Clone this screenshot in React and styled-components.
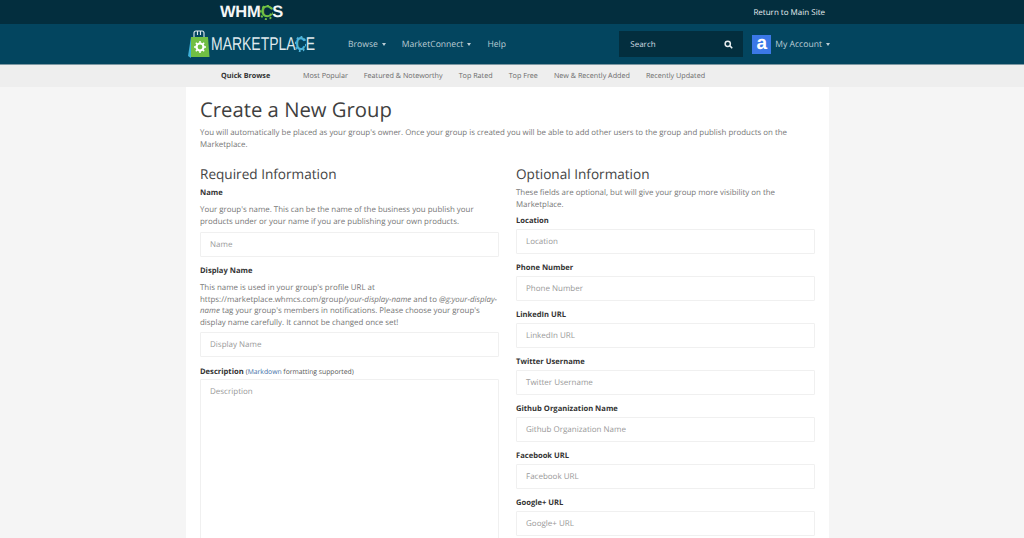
import React from "react";
import styled, { createGlobalStyle } from "styled-components";

const Global = createGlobalStyle`
  html, body { margin: 0; padding: 0; height: 538px; overflow: hidden; background: #f5f5f5; }
  body { font-family: "Open Sans", "Liberation Sans", sans-serif; text-rendering: geometricPrecision; }
  * { box-sizing: border-box; }
`;
const Page = styled.div`width: 1024px; height: 538px; overflow: hidden; display: flex; flex-direction: column;`;
const Inner = styled.div`width: 644px; margin: 0 auto 0 186px; display: flex; align-items: center; height: 100%;`;
const TopBar = styled.div`height: 24px; background: #032e3e; flex: none;`;
const Whmcs = styled.div`margin-left: 34px; font: 700 16.500px "Liberation Sans", sans-serif; color: #f4f6f6; letter-spacing: -0.2px; display: flex; align-items: center;`;
const Return = styled.a`margin-left: auto; margin-right: 5px; font-size: 8px; color: #e8eef0;`;
const NavBar = styled.div`height: 41px; background: #03455f; flex: none; border-bottom: 1px solid #7d98a3;`;
const LogoSlot = styled.div`width: 105px; margin-left: 1px; flex: none;`;
const LogoText = styled.div`font: 400 18.500px "Liberation Sans", sans-serif; color: #dfe9ee; white-space: nowrap; transform: scaleX(0.755); transform-origin: left center;`;
const Cog = styled.span`position: relative; display: inline-block; color: ${p => p.$color}; font-weight: 700;`;
const CogTeeth = styled.svg`position: absolute; left: -1px; top: 50%; margin-top: -${p => p.$size / 2}px; width: calc(100% + 2px); height: ${p => p.$size}px;`;
const NavLink = styled.a`font-size: 8.600px; color: #bccdd5; margin-right: 16px; display: flex; align-items: center; gap: 4px;`;
const Links = styled.div`display: flex; margin-left: 32px;`;
const Caret = styled.i`width: 0; height: 0; border: 2.500px solid transparent; border-top: 3px solid currentColor; border-bottom: 0; display: inline-block;`;
const Search = styled.div`margin-left: auto; width: 124px; height: 26px; background: #032e3e; display: flex; align-items: center; justify-content: space-between; padding: 0 10px 0 11px; font-size: 8px; color: #d5dfe3;`;
const Avatar = styled.div`width: 19px; height: 19px; background: #3b78e7; color: #fff; font: 700 19px/17px "Liberation Sans", sans-serif; text-align: center; margin-left: 9px;`;
const Account = styled.a`font-size: 8.600px; color: #bccdd5; margin-left: 4px; display: flex; align-items: center; gap: 4px;`;
const QuickBar = styled.div`height: 22px; background: #eeeeee; flex: none;`;
const QuickLabel = styled.div`font-size: 7.200px; font-weight: 700; color: #333; margin-left: 35px; width: 82px;`;
const QuickLink = styled.a`font-size: 7.200px; color: #6a6a6a; margin-right: 16px;`;
const Panel = styled.main`width: 643px; margin-left: 186px; background: #fff; padding: 8px 14px 0; flex: 1;`;
const Title = styled.h1`margin: 0; font-size: 20.300px; font-weight: 400; line-height: 29px; color: #3f3f3f;`;
const Text = styled.p`margin: 0; font-size: 7.900px; line-height: 11.500px; color: #777;`;
const Intro = styled(Text)`margin-top: 4px;`;
const Columns = styled.div`display: grid; grid-template-columns: 299px 299px; column-gap: 17px; margin-top: 13px;`;
const Column = styled.section`display: flex; flex-direction: column;`;
const H2 = styled.h2`margin: 0; font-size: 13.600px; font-weight: 400; line-height: 20px; color: #444;`;
const Label = styled.label`display: block; font-size: 7.600px; font-weight: 700; line-height: 12px; color: #333; margin-top: ${p => p.$top ?? 8}px;`;
const Note = styled.span`font-weight: 400; font-size: 6.800px; color: #555;`;
const Link = styled.span`color: #3d6fa8;`;
const Help = styled(Text)`margin-top: ${p => p.$top ?? 6}px;`;
const Field = styled.div`height: ${p => p.$h ?? 25}px; margin-top: ${p => p.$top ?? 4}px; border: 1px solid #f0f0f0; border-radius: 1px; padding: ${p => p.$tall ? "6px" : "0"} 9px 0; display: flex; align-items: ${p => p.$tall ? "flex-start" : "center"}; font-size: 8px; color: #999; flex: none;`;

const Teeth = ({ color, size }) => (
  <CogTeeth $size={size} viewBox="0 0 20 20" preserveAspectRatio="none">
    <circle cx="10" cy="10" r="9" fill="none" stroke={color} strokeWidth="2.500" strokeDasharray="3 4" />
  </CogTeeth>
);
const LogoC = ({ color, size }) => (
  <Cog $color={color}>C<Teeth color={color} size={size} /></Cog>
);
const Bag = () => (
  <svg width="24" height="32" viewBox="0 0 24 32">
    <path d="M8 9V5q0-2 2-2h6q2 0 2 2v4M11.500 3v4M14.500 3v4" fill="none" stroke="#dfe9ee" strokeWidth="1.100" />
    <path d="M5 9h17l1.500 20H5z" fill="#71bf44" />
    <path d="M5 9L2 28l3 2z" fill="#3fb0d8" />
    <circle cx="14" cy="19" r="3.500" fill="none" stroke="#fff" strokeWidth="2.200" />
    <path d="M14 13v2M14 23v2M8 19h2M18 19h2M9.800 14.800l1.500 1.500M16.700 21.700l1.500 1.500M9.800 23.200l1.500-1.500M16.700 16.300l1.500-1.500" stroke="#fff" strokeWidth="1.500" />
  </svg>
);
const SearchIcon = () => (
  <svg width="9" height="9" viewBox="0 0 24 24" fill="none" stroke="#e8eef0" strokeWidth="4">
    <circle cx="10" cy="10" r="7" /><path d="M15 15l7 7" />
  </svg>
);

const right = ["Location", "Phone Number", "LinkedIn URL", "Twitter Username", "Github Organization Name", "Facebook URL", "Google+ URL"];

export default function App() {
  return (
    <Page>
      <Global />
      <TopBar><Inner>
        <Whmcs>WHM<LogoC color="#71bf44" size={15} />S</Whmcs>
        <Return>Return to Main Site</Return>
      </Inner></TopBar>
      <NavBar><Inner>
        <Bag />
        <LogoSlot><LogoText>MARKETPLA<LogoC color="#4fb3d9" size={16} />E</LogoText></LogoSlot>
        <Links>
          <NavLink>Browse <Caret /></NavLink>
          <NavLink>MarketConnect <Caret /></NavLink>
          <NavLink>Help</NavLink>
        </Links>
        <Search>Search<SearchIcon /></Search>
        <Avatar>a</Avatar>
        <Account>My Account <Caret /></Account>
      </Inner></NavBar>
      <QuickBar><Inner>
        <QuickLabel>Quick Browse</QuickLabel>
        {["Most Popular", "Featured & Noteworthy", "Top Rated", "Top Free", "New & Recently Added", "Recently Updated"].map(t => <QuickLink key={t}>{t}</QuickLink>)}
      </Inner></QuickBar>
      <Panel>
        <Title>Create a New Group</Title>
        <Intro>You will automatically be placed as your group's owner. Once your group is created you will be able to add other users to the group and publish products on the Marketplace.</Intro>
        <Columns>
          <Column>
            <H2>Required Information</H2>
            <Label $top={3}>Name</Label>
            <Help>Your group's name. This can be the name of the business you publish your products under or your name if you are publishing your own products.</Help>
            <Field>Name</Field>
            <Label>Display Name</Label>
            <Help>This name is used in your group's profile URL at https://marketplace.whmcs.com/group/<em>your-display-name</em> and to <em>@g:your-display-name</em> tag your group's members in notifications. Please choose your group's display name carefully. It cannot be changed once set!</Help>
            <Field $top={3}>Display Name</Field>
            <Label $top={9}>Description <Note>(<Link>Markdown</Link> formatting supported)</Note></Label>
            <Field $h={200} $tall $top={1}>Description</Field>
          </Column>
          <Column>
            <H2>Optional Information</H2>
            <Help $top={4}>These fields are optional, but will give your group more visibility on the Marketplace.</Help>
            {right.map((t, i) => (
              <React.Fragment key={t}>
                <Label $top={i === 0 ? 4 : 8}>{t}</Label>
                <Field $top={2}>{t}</Field>
              </React.Fragment>
            ))}
          </Column>
        </Columns>
      </Panel>
    </Page>
  );
}
